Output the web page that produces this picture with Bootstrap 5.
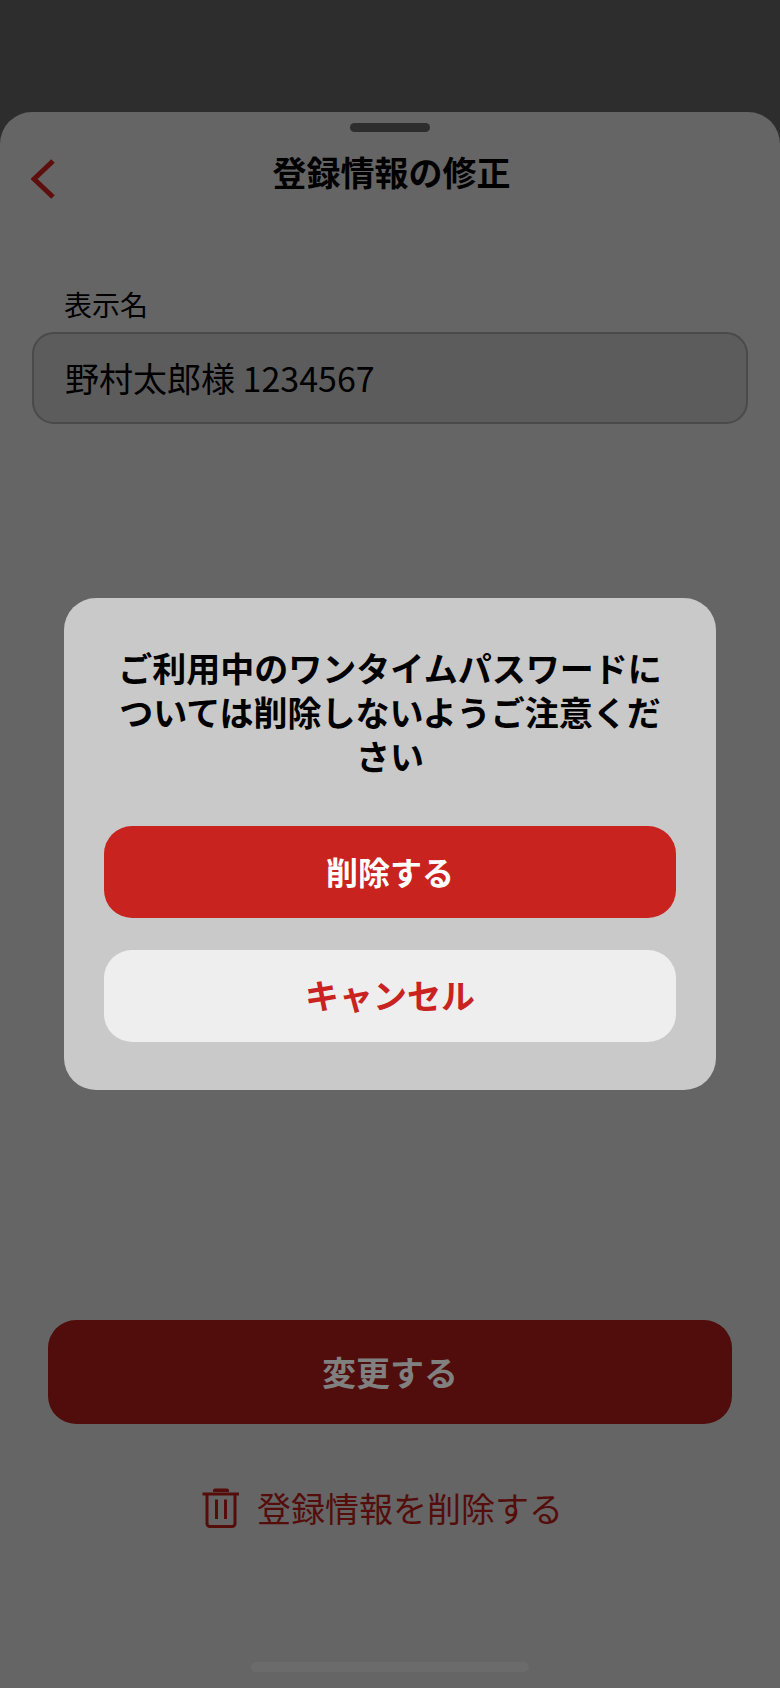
<!DOCTYPE html>
<html lang="ja">
<head>
<meta charset="utf-8">
<title>登録情報の修正</title>
<link href="https://cdn.jsdelivr.net/npm/bootstrap@5.3.0/dist/css/bootstrap.min.css" rel="stylesheet">
<style>
html,body{height:100%}
body{background:#2d2d2d;font-family:"Noto Sans CJK JP",sans-serif;color:#000;padding-top:112px;overflow:hidden}
.sheet{background:#656565;height:1576px;border-radius:32px 32px 0 0;padding:11px 0 16px}
.grip{width:80px;height:9px;border-radius:5px;background:#2d2d2d}
.topbar{height:56px;margin-top:12px;padding-left:31px;padding-right:31px}
.topbar-spacer{width:21px}
.topbar h1{font-size:34px;font-weight:700;line-height:56px;margin:0}
.chev{width:24px;height:40px;display:block;margin-top:15px}
.field-wrap{margin-top:84px;padding:0 32px}
.field-label{font-size:28px;line-height:40px;padding-left:32px;margin-bottom:8px;display:block}
.field-input.form-control{height:92px;background:#5c5c5c;border:2px solid #4a4a4a;border-radius:22px;font-size:34px;color:#000;padding:0 31px 2px}
.save-btn.btn{width:684px;height:104px;background:#500d0b;border:0;border-radius:28px;color:#808080;font-size:34px;font-weight:700;padding:0 0 2px}
.del-link{margin-top:64px;margin-right:15px;color:#540d0b;font-size:34px;line-height:40px;gap:18px}
.del-link svg{display:block;width:37px;height:40px}
.homebar{width:278px;height:10px;border-radius:5px;background:#6b6b6b;margin-top:134px}
.dialog-box{width:652px;height:492px;background:#c9c9c9;border-radius:32px;padding:48px 40px 0}
.dialog-box p{font-size:34px;font-weight:700;line-height:44px;margin:0 0 48px;padding:0 12px}
.dlg-btn.btn{height:92px;border:0;border-radius:28px;font-size:34px;font-weight:700;padding:0 0 3px}
.dlg-danger.btn{background:#c8231f;color:#fff;margin-bottom:32px;font-size:32px}
.dlg-light.btn{background:#eee;color:#c8231f}
</style>
</head>
<body>
<main class="sheet d-flex flex-column">
  <div class="grip mx-auto"></div>
  <header class="topbar d-flex justify-content-between align-items-start">
    <svg class="chev" viewBox="0 0 24 40" aria-hidden="true"><path d="M22 2 3 20l19 18" fill="none" stroke="#5e0e0c" stroke-width="5"/></svg>
    <h1>登録情報の修正</h1>
    <div class="topbar-spacer"></div>
  </header>
  <form class="field-wrap">
    <label class="field-label" for="nm">表示名</label>
    <input id="nm" class="form-control field-input" value="野村太郎様 1234567">
  </form>
  <div class="mt-auto d-flex flex-column align-items-center">
    <button type="button" class="btn save-btn">変更する</button>
    <a class="del-link d-flex align-items-center text-decoration-none" href="#">
      <svg viewBox="0 0 37 40" aria-hidden="true"><path d="M11 4V2.500A2 2 0 0 1 13 .5H25A2 2 0 0 1 27 2.500V4Z M.5 4.500H37V7.500H.5Z" fill="#540d0b"/><path d="M5 7V35.500A3 3 0 0 0 8 38.500H30A3 3 0 0 0 33 35.500V7M14.500 11.500V31M23.500 11.500V31" fill="none" stroke="#540d0b" stroke-width="3"/></svg>
      <span>登録情報を削除する</span>
    </a>
    <div class="homebar"></div>
  </div>
</main>
<div class="position-fixed top-0 start-0 w-100 h-100 d-flex align-items-center justify-content-center">
  <div class="dialog-box d-flex flex-column" role="dialog">
    <p class="text-center">ご利用中のワンタイムパスワードについては削除しないようご注意ください</p>
    <button type="button" class="btn dlg-btn dlg-danger w-100">削除する</button>
    <button type="button" class="btn dlg-btn dlg-light w-100">キャンセル</button>
  </div>
</div>
<script src="https://cdn.jsdelivr.net/npm/bootstrap@5.3.0/dist/js/bootstrap.bundle.min.js"></script>
</body>
</html>
